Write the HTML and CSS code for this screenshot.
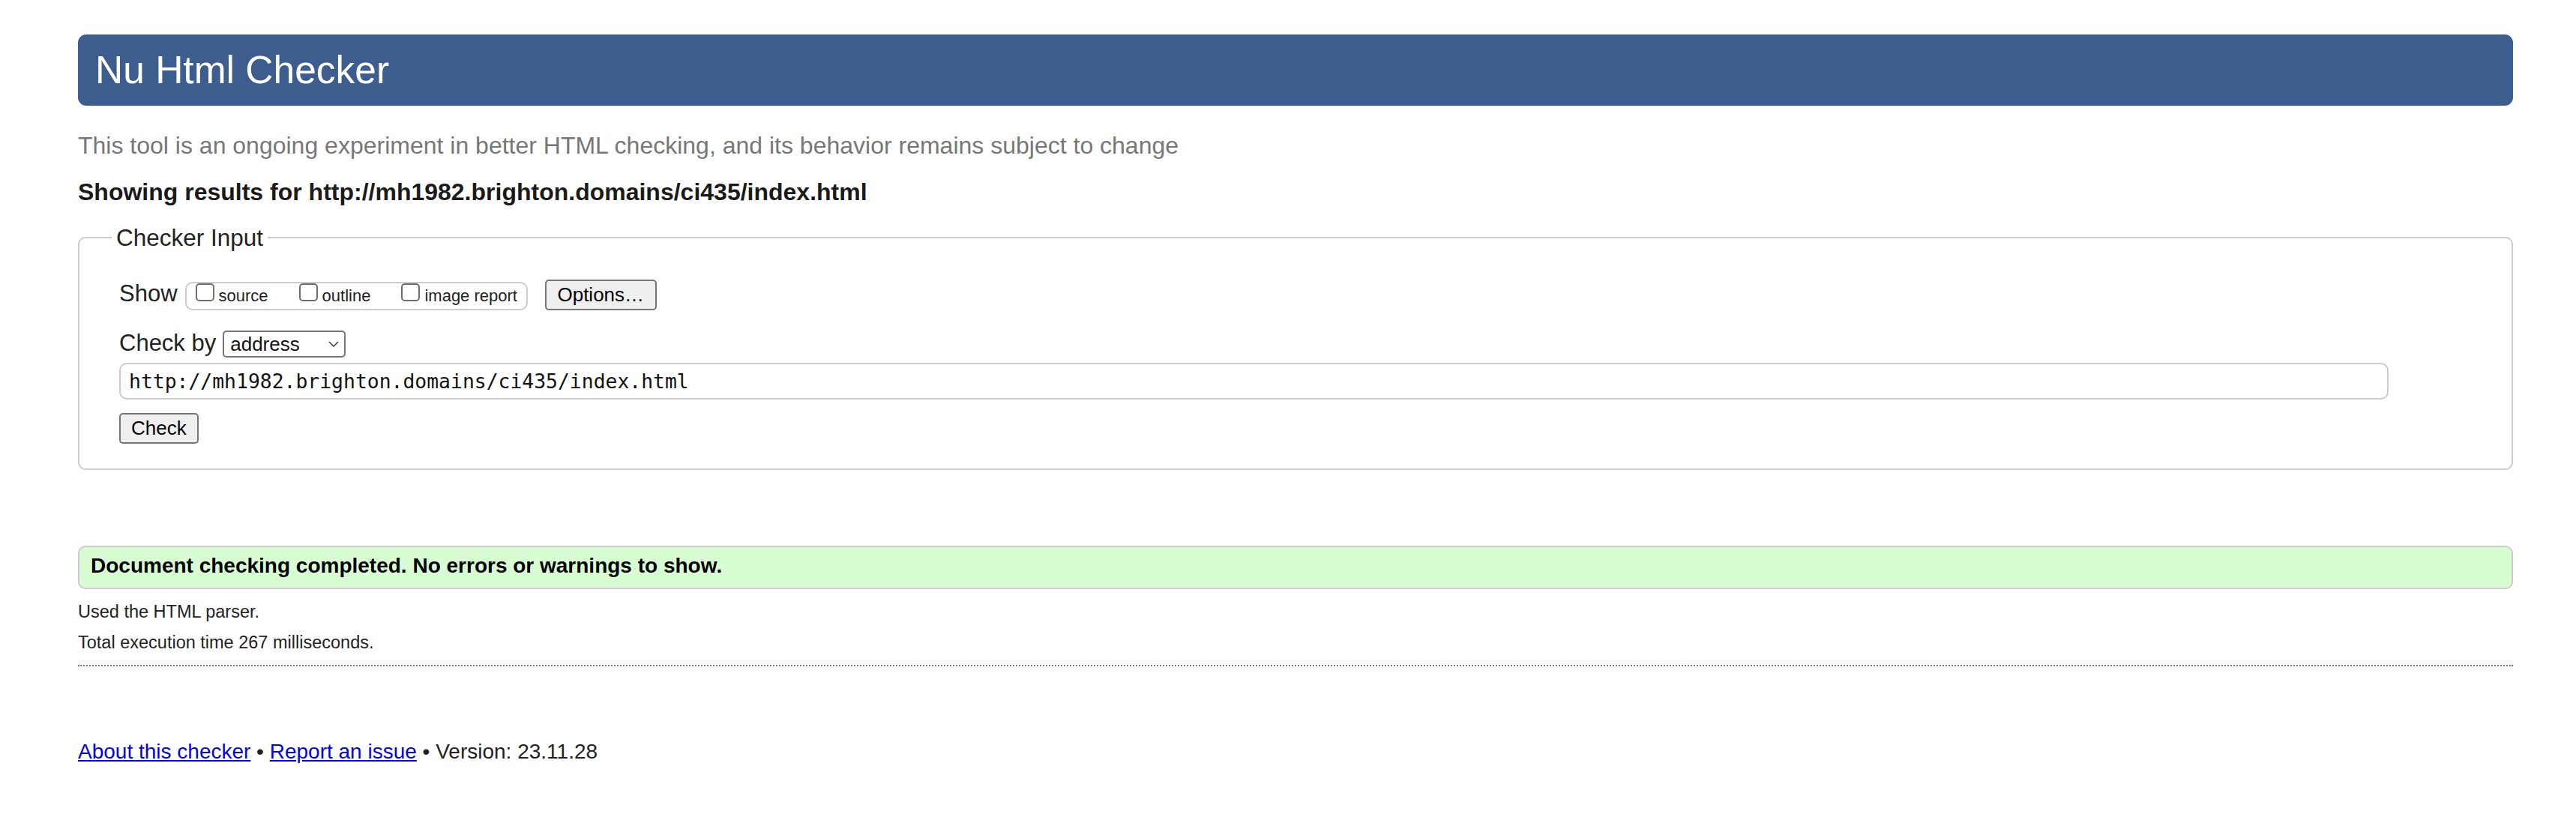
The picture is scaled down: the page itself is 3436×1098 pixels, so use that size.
FILE: index.html
```html
<!DOCTYPE html>
<html lang="en">
<head>
<meta charset="utf-8">
<title>Showing results for http://mh1982.brighton.domains/ci435/index.html - Nu Html Checker</title>
<link rel="stylesheet" href="styles.css">
</head>
<body>
<h1 class="title">Nu Html Checker</h1>
<p class="intro">This tool is an ongoing experiment in better HTML checking, and its behavior remains subject to change</p>
<p class="showing">Showing results for http://mh1982.brighton.domains/ci435/index.html</p>
<form class="checker-form">
  <fieldset class="checker-input">
    <legend class="legend">Checker Input</legend>
    <div class="row">
      <span class="row-label">Show</span>
      <span class="show-group">
        <label class="opt"><input type="checkbox" class="cb">source</label><label class="opt"><input type="checkbox" class="cb">outline</label><label class="opt last"><input type="checkbox" class="cb">image report</label>
      </span>
      <button type="button" class="btn options">Options…</button>
    </div>
    <div class="row row-checkby">
      <span class="row-label">Check by</span>
      <span class="select-wrap">
        <select class="select">
          <option>address</option>
          <option>file upload</option>
          <option>text input</option>
        </select>
        <svg class="chev" width="14" height="8" viewBox="0 0 14 8"><path d="M1 1 L7 7 L13 1" fill="none" stroke="#333" stroke-width="1.4"/></svg>
      </span>
    </div>
    <input class="url" type="url" value="http://mh1982.brighton.domains/ci435/index.html">
    <button type="submit" class="btn check">Check</button>
  </fieldset>
</form>
<p class="success">Document checking completed. No errors or warnings to show.</p>
<p class="meta">Used the HTML parser.</p>
<p class="meta second">Total execution time 267 milliseconds.</p>
<hr class="sep">
<p class="footer"><a href="#">About this checker</a> • <a href="#">Report an issue</a> • Version: 23.11.28</p>
</body>
</html>
```
FILE: styles.css
```css
* { box-sizing: border-box; }
html, body { margin: 0; background: #fff; }
body {
  font-family: "Liberation Sans", Arial, sans-serif;
  color: #222;
  padding: 46px 84px 40px 104px;
}
.title {
  margin: 0;
  height: 95px;
  line-height: 95px;
  padding: 0 23px;
  font-size: 51.5px;
  font-weight: normal;
  color: #fff;
  background: #3d5d8f;
  border-radius: 11px;
}
.intro {
  margin: 35px 0 0;
  font-size: 32px;
  line-height: 36px;
  color: #777;
}
.showing {
  margin: 26px 0 0;
  font-size: 32px;
  line-height: 36px;
  font-weight: bold;
  color: #1a1a1a;
}
.checker-form { margin: 25px 0 0; }
.checker-input {
  margin: 0;
  min-width: 0;
  border: 2px solid #ccc;
  border-radius: 10px;
  padding: 38px 54px 33px 53px;
}
.legend {
  margin-left: -10px;
  padding: 0 6px;
  font-size: 31.5px;
  line-height: 36px;
  color: #222;
}
.row {
  display: flex;
  align-items: baseline;
}
.row-checkby { margin-top: 26px; }
.row-label {
  font-size: 31px;
  line-height: 36px;
  margin-right: 10px;
}
.row-checkby .row-label { margin-right: 9px; }
.show-group {
  display: inline-block;
  height: 38px;
  border: 2px solid #ccc;
  border-radius: 10px;
  padding: 0 12px 0 12px;
  font-size: 22px;
  line-height: 34px;
  white-space: nowrap;
}
.opt { margin-right: 41px; }
.opt.last { margin-right: 0; }
.cb {
  appearance: none;
  -webkit-appearance: none;
  display: inline-block;
  width: 25px;
  height: 24px;
  margin: 0 6px 0 0;
  border: 2px solid #6e6e6e;
  border-radius: 5px;
  background: #fff;
  vertical-align: baseline;
}
.btn {
  font-family: "Liberation Sans", Arial, sans-serif;
  font-size: 26px;
  color: #000;
  background: #efefef;
  border: 2px solid #767676;
  border-radius: 5px;
  height: 41px;
  line-height: 37px;
  padding: 0 14px;
}
.options { margin-left: 23px; padding: 0 14.5px; }
.select-wrap {
  position: relative;
  display: inline-block;
}
.select {
  appearance: none;
  -webkit-appearance: none;
  width: 164px;
  height: 36px;
  border: 2px solid #767676;
  border-radius: 5px;
  background: #fff;
  padding: 0 0 0 8px;
  font-family: "Liberation Sans", Arial, sans-serif;
  font-size: 26px;
  line-height: 32px;
  color: #111;
}
.chev {
  position: absolute;
  right: 9px;
  top: 14px;
  pointer-events: none;
}
.url {
  display: block;
  margin: 7px 0 0;
  width: 96.5%;
  height: 49px;
  border: 2px solid #ccc;
  border-radius: 10px;
  padding: 0 11px;
  font-family: "DejaVu Sans Mono", "Liberation Mono", monospace;
  font-size: 26.4px;
  color: #111;
  background: #fff;
}
.check { display: block; margin-top: 18px; }
.success {
  margin: 101px 0 0;
  height: 58px;
  border: 2px solid #ccc;
  border-radius: 10px;
  background: #d9fdd3;
  padding: 0 15px 4px;
  font-size: 28px;
  line-height: 50px;
  font-weight: bold;
  color: #000;
}
.meta {
  margin: 16px 0 0;
  font-size: 23.5px;
  line-height: 28px;
  color: #222;
}
.meta.second { margin-top: 13px; }
.sep {
  margin: 16px 0 0;
  height: 0;
  border: 0;
  border-top: 2px dotted #777;
}
.footer {
  margin: 97px 0 0;
  font-size: 28px;
  line-height: 33px;
  color: #222;
}
.footer a { color: #00e; text-decoration: underline; }
```
